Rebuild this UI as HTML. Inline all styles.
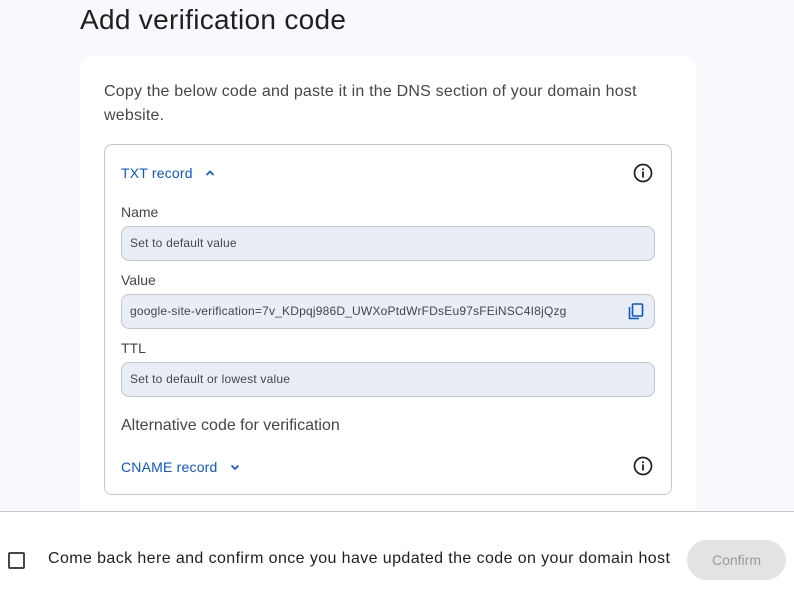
<!DOCTYPE html>
<html><head><style>
*{box-sizing:border-box;margin:0;padding:0}
body{width:794px;height:592px;overflow:hidden;font-family:"Liberation Sans",Arial,sans-serif;background:#fff;position:relative}
.top{position:absolute;left:0;top:0;width:794px;height:511px;background:#f8f9fc}
.line{position:absolute;left:0;top:511px;width:794px;height:1px;background:#c7c7c7}
h1{position:absolute;left:80px;top:4px;font-size:28px;font-weight:400;color:#1f1f1f;letter-spacing:0.3px}
.card{position:absolute;left:80px;top:56px;width:616px;height:455px;background:#fff;border-radius:12px 12px 0 0}
.desc{position:absolute;left:104px;top:80px;width:560px;font-size:16px;line-height:24px;color:#444746;letter-spacing:0.2px}
.box{position:absolute;left:104px;top:144px;width:568px;height:351px;border:1px solid #c7c7c7;border-radius:8px}
.lnk{position:absolute;left:121px;font-size:14px;color:#0b57d0;letter-spacing:0.2px}
.lbl{position:absolute;left:121px;font-size:14px;color:#444746}
.fld{position:absolute;left:121px;width:534px;height:35px;background:#e9edf5;border:1px solid #c4c7cf;border-radius:8px;font-size:12px;color:#444746;padding-left:8px;line-height:33px;letter-spacing:0.2px}
.info{position:absolute;left:633px;width:20px;height:20px}
.cb{position:absolute;left:8px;top:552px;width:17px;height:17px;border:2px solid #444746;border-radius:2px}
.ct{position:absolute;left:48px;top:550px;font-size:16px;color:#1f1f1f;letter-spacing:0.4px}
.btn{position:absolute;left:687px;top:540px;width:99px;height:40px;border-radius:20px;background:#e3e3e3;color:#9a9a9a;font-size:14px;text-align:center;line-height:40px}
</style></head><body>
<div class="top"></div>
<h1>Add verification code</h1>
<div class="card"></div>
<div class="line"></div>
<div class="desc">Copy the below code and paste it in the DNS section of your domain host website.</div>
<div class="box"></div>
<div class="lnk" style="top:165px">TXT record &nbsp;&nbsp;<svg width="10" height="8" viewBox="0 0 10 8" style="vertical-align:1px"><path d="M1.5 6 L5 2.5 L8.5 6" stroke="#0b57d0" stroke-width="1.6" fill="none"/></svg></div>
<svg class="info" style="top:163px" viewBox="0 0 20 20"><circle cx="10" cy="10" r="8.5" stroke="#1f1f1f" stroke-width="1.7" fill="none"/><rect x="9.1" y="8.5" width="1.8" height="6" fill="#1f1f1f"/><rect x="9.1" y="5.3" width="1.8" height="1.8" fill="#1f1f1f"/></svg>
<div class="lbl" style="top:204px">Name</div>
<div class="fld" style="top:226px">Set to default value</div>
<div class="lbl" style="top:272px">Value</div>
<div class="fld" style="top:294px">google-site-verification=7v_KDpqj986D_UWXoPtdWrFDsEu97sFEiNSC4I8jQzg</div>
<svg style="position:absolute;left:628px;top:303px" width="16" height="17" viewBox="0 0 16 17"><rect x="4.5" y="1" width="10" height="12" rx="1" stroke="#0b57d0" stroke-width="1.6" fill="none"/><path d="M1.5 4 V15.5 H11" stroke="#0b57d0" stroke-width="1.6" fill="none"/></svg>
<div class="lbl" style="top:340px">TTL</div>
<div class="fld" style="top:362px">Set to default or lowest value</div>
<div class="lbl" style="top:417px;font-size:16px;color:#444746">Alternative code for verification</div>
<div class="lnk" style="top:459px">CNAME record &nbsp;&nbsp;<svg width="10" height="8" viewBox="0 0 10 8" style="vertical-align:1px"><path d="M1.5 2.5 L5 6 L8.5 2.5" stroke="#0b57d0" stroke-width="1.6" fill="none"/></svg></div>
<svg class="info" style="top:456px" viewBox="0 0 20 20"><circle cx="10" cy="10" r="8.5" stroke="#1f1f1f" stroke-width="1.7" fill="none"/><rect x="9.1" y="8.5" width="1.8" height="6" fill="#1f1f1f"/><rect x="9.1" y="5.3" width="1.8" height="1.8" fill="#1f1f1f"/></svg>
<div class="cb"></div>
<div class="ct">Come back here and confirm once you have updated the code on your domain host</div>
<div class="btn">Confirm</div>
</body></html>
